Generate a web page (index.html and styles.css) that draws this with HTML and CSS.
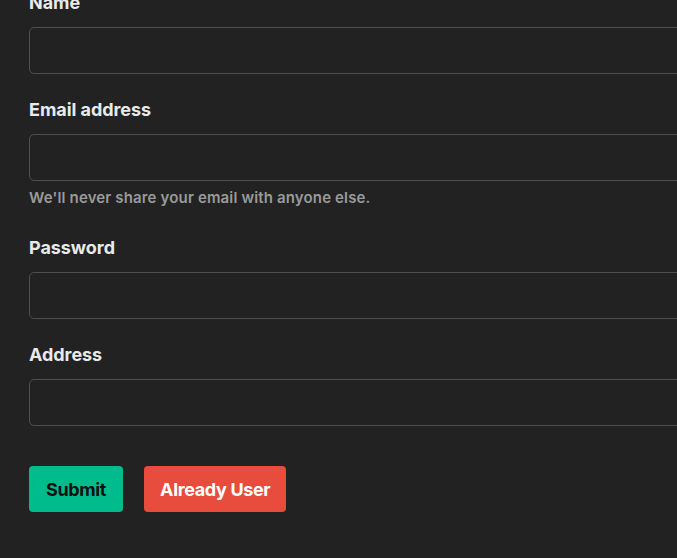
FILE: index.html
```html
<!DOCTYPE html>
<html lang="en">
<head>
<meta charset="utf-8">
<title>Register</title>
<link rel="stylesheet" href="styles.css">
</head>
<body>
<form class="form">
  <div class="field">
    <label class="label" for="name">Name</label>
    <input class="input" id="name" type="text">
  </div>
  <div class="field">
    <label class="label" for="email">Email address</label>
    <input class="input" id="email" type="email">
    <small class="help">We'll never share your email with anyone else.</small>
  </div>
  <div class="field">
    <label class="label" for="password">Password</label>
    <input class="input" id="password" type="password">
  </div>
  <div class="field">
    <label class="label" for="address">Address</label>
    <input class="input" id="address" type="text">
  </div>
  <div class="actions">
    <button class="btn btn-success" type="submit">Submit</button>
    <button class="btn btn-danger" type="button">Already User</button>
  </div>
</form>
</body>
</html>
```
FILE: styles.css
```css
html, body {
  margin: 0;
  padding: 0;
  background: #222222;
  overflow: hidden;
}
body {
  font-family: Inter, "Liberation Sans", sans-serif;
  color: #dee2e6;
}
.form {
  width: 740px;
  margin-top: -11px;
  padding-left: 29px;
  display: flex;
  flex-direction: column;
}
.field {
  display: flex;
  flex-direction: column;
  margin-bottom: 22px;
}
.label {
  font-size: 18px;
  font-weight: 700;
  letter-spacing: -0.003em;
  line-height: 27px;
  margin-bottom: 11px;
  color: #e8eaec;
}
.input {
  box-sizing: border-box;
  height: 47px;
  width: 100%;
  background: #222222;
  border: 1px solid #4f4f4f;
  border-radius: 5px;
  padding: 6px 12px;
  color: #fff;
  font-size: 16px;
  font-family: inherit;
}
.help {
  margin-top: 7px;
  margin-bottom: 4px;
  font-size: 15px;
  font-weight: 600;
  letter-spacing: 0.01em;
  line-height: 20px;
  color: #9a9a9a;
}
.actions {
  display: flex;
  gap: 21px;
  margin-top: 18px;
}
.btn {
  height: 46px;
  border: none;
  border-radius: 4px;
  padding: 0 16px;
  font-family: inherit;
  font-size: 18px;
  font-weight: 700;
  letter-spacing: -0.02em;
}
.btn-success {
  background: #00bc8c;
  color: #111;
  padding: 0 17px;
}
.btn-danger {
  background: #e74c3c;
  color: #fff;
}
```
